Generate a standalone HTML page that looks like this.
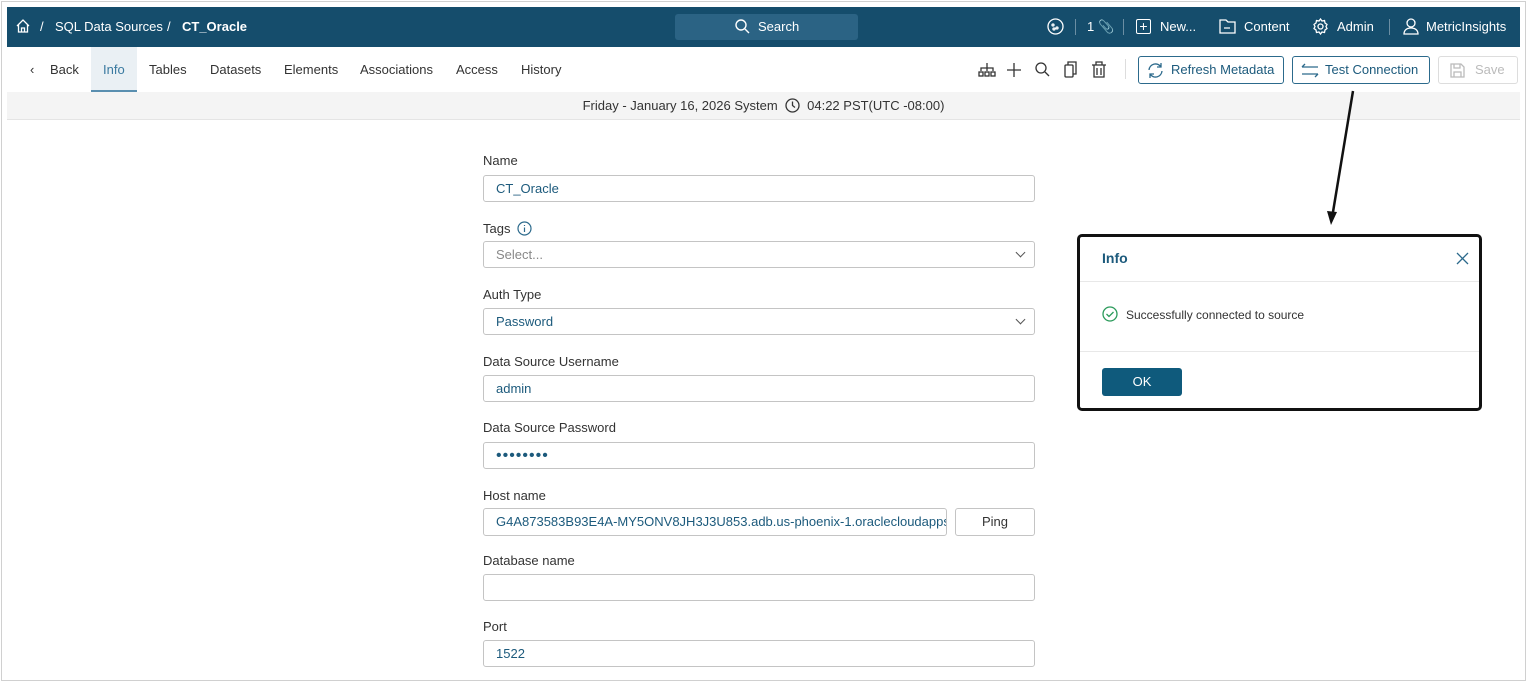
<!DOCTYPE html><html><head><style>
*{box-sizing:border-box;margin:0;padding:0}
body{width:1527px;height:682px;background:#fff;font-family:"Liberation Sans",sans-serif;position:relative;overflow:hidden;font-size:13px;color:#222}
.frame{position:absolute;left:1px;top:1px;width:1525px;height:680px;border:1px solid #d0d0d0}
.top{position:absolute;left:7px;top:7px;width:1513px;height:40px;background:#154d6c;color:#fff}
.top span{position:absolute;top:12px;font-size:13px}
.search{position:absolute;left:668px;top:7px;width:183px;height:26px;background:#2b6384;border-radius:3px}
.nav{position:absolute;left:7px;top:47px;width:1513px;height:45px}
.nav span{position:absolute;top:15px;font-size:13px;color:#333}
.info{position:absolute;left:84px;top:0;width:46px;height:45px;background:#eaf0f4;border-bottom:2px solid #5a8fb0}
.date{position:absolute;left:7px;top:92px;width:1513px;height:28px;background:#f4f4f4;border-bottom:1px solid #e4e4e4;text-align:center;font-size:13px;line-height:28px;color:#333}
.btn{position:absolute;top:56px;height:28px;border:1px solid #2c6a8c;border-radius:3px;color:#1c5a7c;font-size:13px;line-height:26px}
.lbl{position:absolute;left:483px;font-size:13px;color:#333}
.inp{position:absolute;left:483px;width:552px;height:27px;border:1px solid #c4c4c4;border-radius:3px;font-size:13px;color:#1c5a7c;padding-left:12px;line-height:25px}
.chev{position:absolute;right:10px;top:7px;width:7px;height:7px;border-right:1.3px solid #555;border-bottom:1.3px solid #555;transform:rotate(45deg)}
.modal{position:absolute;left:1077px;top:234px;width:405px;height:177px;border:3px solid #111;border-radius:5px;background:#fff}
</style></head><body>
<div class="frame"></div>
<div class="top">
<svg style="position:absolute;left:8px;top:11px" width="16" height="16" viewBox="0 0 16 16" fill="none" stroke="#fff" stroke-width="1.3"><path d="M2 8L8 2l6 6M3.5 6.5V14h9V6.5M6.5 14v-4h3v4"/></svg>
<span style="left:33px">/</span><span style="left:48px">SQL Data Sources</span><span style="left:160px">/</span><span style="left:175px;font-weight:bold">CT_Oracle</span>
<div class="search"><svg style="position:absolute;left:60px;top:5px" width="15" height="15" viewBox="0 0 15 15" fill="none" stroke="#fff" stroke-width="1.4"><circle cx="6" cy="6" r="5"/><path d="M10 10l4 4"/></svg><span style="left:83px;top:5px">Search</span></div>
<svg style="position:absolute;left:1040px;top:11px" width="17" height="17" viewBox="0 0 17 17" fill="none" stroke="#fff" stroke-width="1.3"><circle cx="8.5" cy="8.5" r="7.5"/><circle cx="6" cy="7" r="1"/><circle cx="10" cy="10" r="1"/><circle cx="7" cy="11" r="1"/></svg>
<div style="position:absolute;left:1068px;top:12px;width:1px;height:16px;background:#6b8ea3"></div>
<span style="left:1080px">1</span><span style="left:1091px">&#128206;</span>
<div style="position:absolute;left:1116px;top:12px;width:1px;height:16px;background:#6b8ea3"></div>
<div style="position:absolute;left:1129px;top:12px;width:15px;height:15px;border:1.3px solid #fff;border-radius:2px;text-align:center;line-height:12px;font-size:14px">+</div>
<span style="left:1153px">New...</span>
<svg style="position:absolute;left:1212px;top:12px" width="17" height="15" viewBox="0 0 17 15" fill="none" stroke="#fff" stroke-width="1.3"><path d="M1 1h6l2 2h7v11H1z M5 9h6"/></svg>
<span style="left:1237px">Content</span>
<svg style="position:absolute;left:1305px;top:11px" width="17" height="17" viewBox="0 0 17 17" fill="none" stroke="#fff" stroke-width="1.3"><circle cx="8.5" cy="8.5" r="2.5"/><path d="M8.5 1l1.5 2 2.5-.5.5 2.5 2 1.5-1 2 1 2-2 1.5-.5 2.5-2.5-.5-1.5 2-1.5-2-2.5.5-.5-2.5-2-1.5 1-2-1-2 2-1.5.5-2.5 2.5.5z"/></svg>
<span style="left:1330px">Admin</span>
<div style="position:absolute;left:1382px;top:12px;width:1px;height:16px;background:#6b8ea3"></div>
<svg style="position:absolute;left:1396px;top:11px" width="16" height="17" viewBox="0 0 16 17" fill="none" stroke="#fff" stroke-width="1.3"><circle cx="8" cy="5" r="4"/><path d="M1 16c0-4 3-6 7-6s7 2 7 6z"/></svg>
<span style="left:1419px">MetricInsights</span>
</div>
<div class="nav">
<div class="info"></div>
<span style="left:23px">&#8249;</span><span style="left:43px">Back</span><span style="left:96px;color:#3a7aa0">Info</span><span style="left:142px">Tables</span><span style="left:203px">Datasets</span><span style="left:277px">Elements</span><span style="left:353px">Associations</span><span style="left:449px">Access</span><span style="left:514px">History</span>
<svg style="position:absolute;left:971px;top:14px" width="140" height="18" viewBox="0 0 140 18" fill="none" stroke="#333" stroke-width="1.3"><path d="M9 2v5M3 10V7h12v3M9 7v3"/><rect x="1" y="11" width="4" height="4"/><rect x="7" y="11" width="4" height="4"/><rect x="13" y="11" width="4" height="4"/><path d="M36 2v14M29 9h14"/><circle cx="63" cy="7" r="5"/><path d="M67 11l4 4"/><rect x="87" y="4" width="8" height="12" rx="1"/><path d="M90 4V1h8v12h-3"/><path d="M114 4h14M118 4V1h6v3M116 4v12h10V4M119 7v7M123 7v7"/></svg>
<div style="position:absolute;left:1118px;top:12px;width:1px;height:20px;background:#ddd"></div>
</div>
<div class="btn" style="left:1138px;width:146px"><svg style="position:absolute;left:8px;top:5px" width="17" height="17" viewBox="0 0 17 17" fill="none" stroke="#2c6a8c" stroke-width="1.3"><path d="M2 8a6.5 6.5 0 0 1 12-3M15 9a6.5 6.5 0 0 1-12 3M14 1v4h-4M3 16v-4h4"/></svg><span style="position:absolute;left:32px">Refresh Metadata</span></div>
<div class="btn" style="left:1292px;width:138px"><svg style="position:absolute;left:8px;top:6px" width="18" height="15" viewBox="0 0 18 15" fill="none" stroke="#2c6a8c" stroke-width="1.3"><path d="M1 4h16M1 4l3-3M17 11H1M17 11l-3 3"/></svg><span style="position:absolute;left:32px">Test Connection</span></div>
<div class="btn" style="left:1438px;width:80px;border-color:#ddd;color:#bbb"><svg style="position:absolute;left:11px;top:6px" width="15" height="15" viewBox="0 0 15 15" fill="none" stroke="#bbb" stroke-width="1.3"><path d="M1 1h10l3 3v10H1z M4 1v4h6V1M4 14V9h7v5"/></svg><span style="position:absolute;left:36px">Save</span></div>
<div class="date">Friday - January 16, 2026 System &nbsp;<svg style="vertical-align:-3px" width="15" height="15" viewBox="0 0 15 15" fill="none" stroke="#333" stroke-width="1.3"><circle cx="7.5" cy="7.5" r="6.5"/><path d="M7.5 3.5v4l2.5 2"/></svg>&nbsp; 04:22 PST(UTC -08:00)</div>

<div class="lbl" style="top:153px">Name</div><div class="inp" style="top:175px">CT_Oracle</div>
<div class="lbl" style="top:221px">Tags <svg style="vertical-align:-3px;margin-left:3px" width="15" height="15" viewBox="0 0 15 15" fill="none" stroke="#2c6a8c" stroke-width="1.2"><circle cx="7.5" cy="7.5" r="6.5"/><path d="M7.5 6.5v4.5M7.5 4v1"/></svg></div><div class="inp" style="top:241px;color:#888">Select...<div class="chev"></div></div>
<div class="lbl" style="top:287px">Auth Type</div><div class="inp" style="top:308px">Password<div class="chev"></div></div>
<div class="lbl" style="top:354px">Data Source Username</div><div class="inp" style="top:375px">admin</div>
<div class="lbl" style="top:420px">Data Source Password</div><div class="inp" style="top:442px;font-size:16px;letter-spacing:1px">&bull;&bull;&bull;&bull;&bull;&bull;&bull;&bull;</div>
<div class="lbl" style="top:488px">Host name</div><div class="inp" style="top:508px;width:464px;height:28px;overflow:hidden;white-space:nowrap">G4A873583B93E4A-MY5ONV8JH3J3U853.adb.us-phoenix-1.oraclecloudapps.com</div>
<div class="inp" style="top:508px;left:955px;width:80px;height:28px;color:#333;text-align:center;padding:0">Ping</div>
<div class="lbl" style="top:553px">Database name</div><div class="inp" style="top:574px"></div>
<div class="lbl" style="top:619px">Port</div><div class="inp" style="top:640px">1522</div>

<svg style="position:absolute;left:0;top:0" width="1527" height="682"><path d="M1353 91L1333 212" stroke="#111" stroke-width="2.5"/><path d="M1327 211l4 14 6-13z" fill="#111"/></svg>
<div class="modal">
<div style="position:absolute;left:22px;top:13px;font-size:14px;font-weight:bold;color:#1c5a7c">Info</div>
<svg style="position:absolute;left:376px;top:15px" width="13" height="13" viewBox="0 0 13 13" stroke="#2c6a8c" stroke-width="1.3"><path d="M1 1l11 11M12 1L1 12"/></svg>
<div style="position:absolute;left:0;top:44px;width:100%;height:1px;background:#e8e8e8"></div>
<svg style="position:absolute;left:22px;top:69px" width="16" height="16" viewBox="0 0 16 16" fill="none" stroke="#2a9a5a" stroke-width="1.3"><circle cx="8" cy="8" r="7"/><path d="M4.5 8l2.5 2.5 4.5-4.5"/></svg>
<div style="position:absolute;left:46px;top:71px;font-size:12px;color:#333">Successfully connected to source</div>
<div style="position:absolute;left:0;top:114px;width:100%;height:1px;background:#e8e8e8"></div>
<div style="position:absolute;left:22px;top:131px;width:80px;height:28px;background:#0f5a7c;border-radius:3px;color:#fff;text-align:center;line-height:28px;font-size:13px">OK</div>
</div>
</body></html>
